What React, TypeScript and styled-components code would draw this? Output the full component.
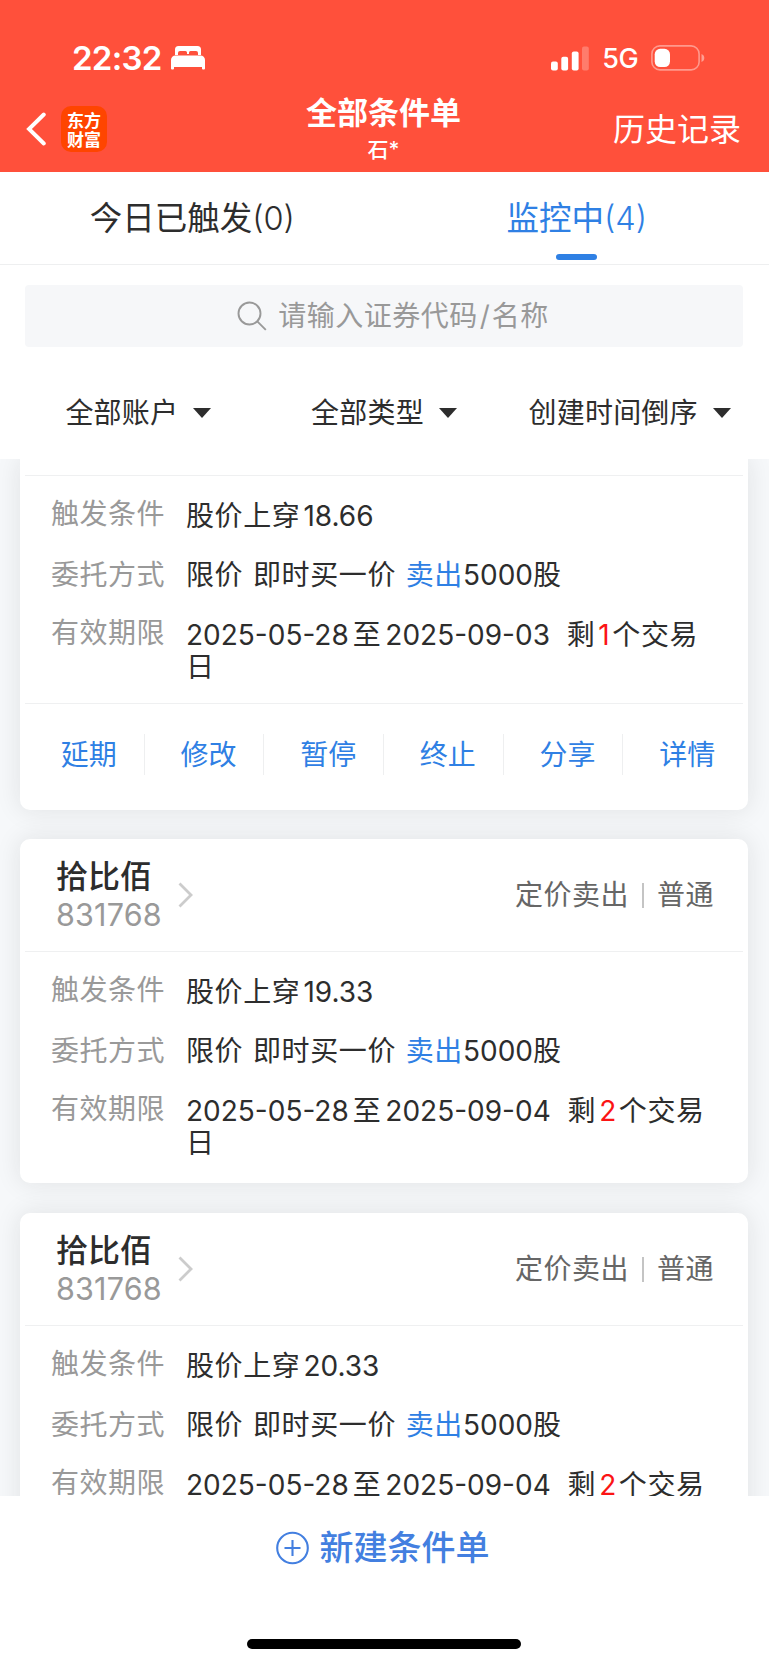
import React from "react";
import styled, { createGlobalStyle } from "styled-components";

const BLUE = "#2f80e4";

const GlobalStyle = createGlobalStyle`
  * { box-sizing: border-box; }
  body {
    margin: 0;
    background: #fff;
    color: #2d2d2d;
    font-family: Inter, "Noto Sans CJK SC", sans-serif;
    font-size: 28px;
    line-height: 32px;
    -webkit-font-smoothing: antialiased;
  }
`;

const Screen = styled.div`
  width: 769px;
  height: 1665px;
  display: flex;
  flex-direction: column;
  overflow: hidden;
  background: #fff;
`;

const Header = styled.header`
  height: 172px;
  flex: none;
  padding-top: 38px;
  background: #ff503b;
  color: #fff;
`;

const StatusBar = styled.div`
  height: 40px;
  display: flex;
  align-items: center;
  justify-content: space-between;
  padding: 0 64px 0 72px;
`;

const StatusGroup = styled.div<{ $gap: number }>`
  display: flex;
  align-items: center;
  gap: ${(p) => p.$gap}px;
`;

const Clock = styled.span`
  font-size: 33px;
  font-weight: 600;
  letter-spacing: -0.7px;
`;

const Network = styled.span`
  padding-top: 2px;
  font-size: 27px;
  font-weight: 500;
  letter-spacing: -0.6px;
`;

const NavBar = styled.div`
  display: grid;
  grid-template-columns: 1fr auto 1fr;
  align-items: center;
  height: 94px;
  padding: 0 28px 0 26px;
`;

const NavLeft = styled.div`
  display: flex;
  align-items: center;
  gap: 15px;
  padding-top: 8px;
`;

const Logo = styled.div`
  width: 46px;
  height: 46px;
  border-radius: 10px;
  background: #ff4500;
  display: flex;
  flex-direction: column;
  justify-content: center;
  align-items: center;
  font-family: "Noto Sans CJK SC", sans-serif;
  font-size: 17px;
  font-weight: 700;
  line-height: 19px;
`;

const NavTitle = styled.div`
  padding-top: 7px;
  text-align: center;
`;

const Title = styled.h1`
  margin: 0;
  font-size: 31px;
  line-height: 42px;
  font-weight: 600;
`;

const Account = styled.div`
  font-size: 21px;
  line-height: 31px;
  font-weight: 500;
`;

const History = styled.div`
  justify-self: end;
  padding-top: 10px;
  font-size: 32px;
`;

const Tabs = styled.nav`
  flex: none;
  height: 93px;
  display: grid;
  grid-template-columns: 1fr 1fr;
  border-bottom: 1px solid #eeeff0;
`;

const Tab = styled.div<{ $active?: boolean }>`
  display: flex;
  flex-direction: column;
  align-items: center;
  padding-top: 27px;
  font-size: 32.5px;
  line-height: 40px;
  color: ${(p) => (p.$active ? BLUE : "#2d2d2d")};
  &::after {
    content: "";
    width: 41px;
    height: 6px;
    margin-top: 15px;
    border-radius: 3px;
    background: ${(p) => (p.$active ? BLUE : "transparent")};
  }
`;

const Count = styled.span`
  font-weight: 350;
`;

const Search = styled.div`
  flex: none;
  height: 62px;
  margin: 20px 26px 0 25px;
  display: flex;
  align-items: center;
  justify-content: center;
  gap: 11px;
  padding-left: 18px;
  border-radius: 4px;
  background: #f6f7f9;
  color: #999;
  letter-spacing: 0.5px;
`;

const Slash = styled.span`
  margin: 0 1.5px 0 2px;
`;

const Filters = styled.div`
  flex: none;
  height: 112px;
  display: grid;
  grid-template-columns: repeat(3, 1fr);
  align-items: center;
  padding: 20px 16px 0;
`;

const Filter = styled.div`
  display: flex;
  align-items: center;
  justify-content: center;
  gap: 15px;
  padding-right: 1px;
  letter-spacing: 0.2px;
`;

const Caret = styled.span`
  border: 9.5px solid transparent;
  border-top: 10px solid #2d2d2d;
  border-bottom: 0;
`;

const List = styled.main`
  flex: none;
  height: 1037px;
  overflow: hidden;
  background: #f6f8fa;
  padding: 0 21px 0 20px;
`;

const Card = styled.article<{ $cut?: boolean }>`
  height: ${(p) => (p.$cut ? 351 : 344)}px;
  margin-bottom: ${(p) => (p.$cut ? 29 : 30)}px;
  padding: ${(p) => (p.$cut ? 16 : 0)}px 5px 0;
  border-radius: ${(p) => (p.$cut ? "0 0 10px 10px" : "10px")};
  background: #fff;
  box-shadow: 0 0 26px rgba(30, 30, 30, 0.1);
`;

const CardHead = styled.div`
  height: 112px;
  display: flex;
  align-items: center;
  padding: 0 29px 0 31px;
`;

const Stock = styled.div`
  margin-right: 16px;
  padding-top: 2px;
`;

const StockName = styled.div`
  font-size: 32px;
  line-height: 38px;
  font-weight: 500;
`;

const StockCode = styled.div`
  font-size: 30.5px;
  line-height: 38px;
  color: #999;
  letter-spacing: 0.2px;
`;

const Kind = styled.div`
  margin-left: auto;
  display: flex;
  align-items: center;
  gap: 13px;
  color: #666;
  letter-spacing: 0.5px;
`;

const Bar = styled.i`
  width: 2px;
  height: 25px;
  background: #c4c4c4;
`;

const Details = styled.dl`
  margin: 0;
  height: 228px;
  padding: 22px 20px 0 26px;
  border-top: 1px solid #eff0f1;
`;

const Row = styled.div<{ $height: number; $shift?: number }>`
  display: grid;
  grid-template-columns: 135px 1fr;
  align-items: start;
  height: ${(p) => p.$height}px;
  dd {
    margin: 0;
    padding-top: ${(p) => p.$shift || 0}px;
  }
`;

const Label = styled.dt`
  color: #999;
  letter-spacing: 0.5px;
`;

const Value = styled.dd`
  letter-spacing: 0.6px;
  word-spacing: 1.3px;
`;

const Num = styled.span<{ $before?: number; $after?: number; $track?: number }>`
  margin-left: ${(p) => p.$before || 0}px;
  margin-right: ${(p) => p.$after || 0}px;
  letter-spacing: ${(p) => p.$track || 0}px;
`;

const Sell = styled.span`
  color: ${BLUE};
`;

const Days = styled.span`
  margin: 0 2px 0 3px;
  color: #fb1414;
`;

const Actions = styled.div`
  height: 107px;
  display: grid;
  grid-template-columns: repeat(6, 1fr);
  align-items: center;
  padding-bottom: 5px;
  border-top: 1px solid #eff0f1;
`;

const Action = styled.div`
  height: 41px;
  display: flex;
  align-items: center;
  justify-content: center;
  padding-left: 9px;
  color: ${BLUE};
  border-right: 1px solid #eeeff0;
  &:last-child { border-right-color: transparent; }
`;

const Footer = styled.footer`
  flex: 1;
  display: flex;
  flex-direction: column;
  align-items: center;
  justify-content: space-between;
  padding: 32px 0 16px;
`;

const Create = styled.div`
  display: flex;
  align-items: center;
  gap: 11px;
  padding-right: 4px;
  color: #437fe0;
  font-size: 34px;
  line-height: 40px;
  font-weight: 500;
`;

const HomeIndicator = styled.div`
  width: 274px;
  height: 10px;
  margin-right: 1px;
  border-radius: 5px;
  background: #000;
`;

const BedIcon = () => (
  <svg width="34" height="24" viewBox="0 0 34 24" fill="#fff">
    <path d="M4 9V3.500A3.500 3.500 0 0 1 7.500 0h19A3.500 3.500 0 0 1 30 3.500V9h-3V7a2 2 0 0 0-2-2h-5.500a1.500 1.500 0 0 0-1.500 1.500V8h-2V6.500A1.500 1.500 0 0 0 14.500 5H9a2 2 0 0 0-2 2v2z" />
    <path d="M0 22.500V14a4.500 4.500 0 0 1 4.500-4.500h25A4.500 4.500 0 0 1 34 14v8.500a1 1 0 0 1-1 1h-1a1 1 0 0 1-1-1V21H3v1.500a1 1 0 0 1-1 1H1a1 1 0 0 1-1-1z" />
  </svg>
);

const SignalIcon = () => (
  <svg width="38" height="25" viewBox="0 0 38 25" fill="#fff">
    <rect x="0" y="15.500" width="6.800" height="9" rx="2" />
    <rect x="10.300" y="10.800" width="6.800" height="13.700" rx="2" />
    <rect x="20.800" y="5.500" width="6.800" height="19" rx="2" />
    <rect x="31" y="0.500" width="6.800" height="24" rx="2" opacity="0.25" />
  </svg>
);

const BatteryIcon = () => (
  <svg width="54" height="26" viewBox="0 0 54 26">
    <rect x="0.900" y="0.900" width="47.200" height="24" rx="8" fill="none" stroke="#fff" strokeOpacity="0.42" strokeWidth="1.600" />
    <rect x="3.700" y="3.800" width="15.300" height="18.200" rx="5.500" fill="#fff" />
    <path d="M50.500 9v8c1.800-.7 2.800-2.200 2.800-4s-1-3.300-2.800-4z" fill="#fff" fillOpacity="0.45" />
  </svg>
);

const BackIcon = () => (
  <svg width="20" height="34" viewBox="0 0 20 34" fill="none" stroke="#fff" strokeWidth="3.900" strokeLinecap="round">
    <path d="M17.800 2.500 3 17l14.800 14.500" />
  </svg>
);

const SearchIcon = () => (
  <svg width="30" height="30" viewBox="0 0 30 30" fill="none" stroke="#999" strokeWidth="1.900">
    <circle cx="12.500" cy="12.500" r="11" />
    <path d="m20.300 20.300 8.500 8.500" />
  </svg>
);

const ChevronIcon = () => (
  <svg width="16" height="26" viewBox="0 0 16 26" fill="none" stroke="#ccc" strokeWidth="2.800">
    <path d="M1.500 1.500 13 13 1.500 24.500" />
  </svg>
);

const PlusIcon = () => (
  <svg width="33" height="34" viewBox="0 0 33 34" fill="none" stroke="#437fe0" strokeWidth="2.100">
    <circle cx="16.500" cy="17" r="15.300" />
    <path d="M16.500 9v16M8.500 17h16" />
  </svg>
);

interface Order {
  price: string;
  until: string;
  days: number;
  open?: boolean;
}

const ORDERS: Order[] = [
  { price: "18.66", until: "2025-09-03", days: 1, open: true },
  { price: "19.33", until: "2025-09-04", days: 2 },
  { price: "20.33", until: "2025-09-04", days: 2 },
];

const ACTIONS = ["延期", "修改", "暂停", "终止", "分享", "详情"];
const FILTERS = ["全部账户", "全部类型", "创建时间倒序"];

const OrderCard = ({ price, until, days, open }: Order) => (
  <Card $cut={open}>
    {!open && (
      <CardHead>
        <Stock>
          <StockName>拾比佰</StockName>
          <StockCode>831768</StockCode>
        </Stock>
        <ChevronIcon />
        <Kind>
          <span>定价卖出</span>
          <Bar />
          <span>普通</span>
        </Kind>
      </CardHead>
    )}
    <Details>
      <Row $height={61} $shift={2}>
        <Label>触发条件</Label>
        <Value>
          股价上穿<Num $before={3}>{price}</Num>
        </Value>
      </Row>
      <Row $height={58}>
        <Label>委托方式</Label>
        <Value>
          限价 即时买一价 <Sell>卖出</Sell>
          <Num>5000</Num>股
        </Value>
      </Row>
      <Row $height={64} $shift={2}>
        <Label>有效期限</Label>
        <Value>
          <Num $after={4}>2025-05-28</Num>至<Num $before={4} $after={7}>{until}</Num> 剩
          <Days>{days}</Days>个交易日
        </Value>
      </Row>
    </Details>
    {open && (
      <Actions>
        {ACTIONS.map((name) => (
          <Action key={name}>{name}</Action>
        ))}
      </Actions>
    )}
  </Card>
);

export default function App() {
  return (
    <Screen>
      <GlobalStyle />
      <Header>
        <StatusBar>
          <StatusGroup $gap={9}>
            <Clock>22:32</Clock>
            <BedIcon />
          </StatusGroup>
          <StatusGroup $gap={13}>
            <SignalIcon />
            <Network>5G</Network>
            <BatteryIcon />
          </StatusGroup>
        </StatusBar>
        <NavBar>
          <NavLeft>
            <BackIcon />
            <Logo>
              <span>东方</span>
              <span>财富</span>
            </Logo>
          </NavLeft>
          <NavTitle>
            <Title>全部条件单</Title>
            <Account>石*</Account>
          </NavTitle>
          <History>历史记录</History>
        </NavBar>
      </Header>
      <Tabs>
        <Tab>
          <span>今日已触发<Count>(0)</Count></span>
        </Tab>
        <Tab $active>
          <span>监控中<Count>(4)</Count></span>
        </Tab>
      </Tabs>
      <Search>
        <SearchIcon />
        <span>请输入证券代码<Slash>/</Slash>名称</span>
      </Search>
      <Filters>
        {FILTERS.map((name) => (
          <Filter key={name}>
            {name}
            <Caret />
          </Filter>
        ))}
      </Filters>
      <List>
        {ORDERS.map((order) => (
          <OrderCard key={order.price} {...order} />
        ))}
      </List>
      <Footer>
        <Create>
          <PlusIcon />
          新建条件单
        </Create>
        <HomeIndicator />
      </Footer>
    </Screen>
  );
}
